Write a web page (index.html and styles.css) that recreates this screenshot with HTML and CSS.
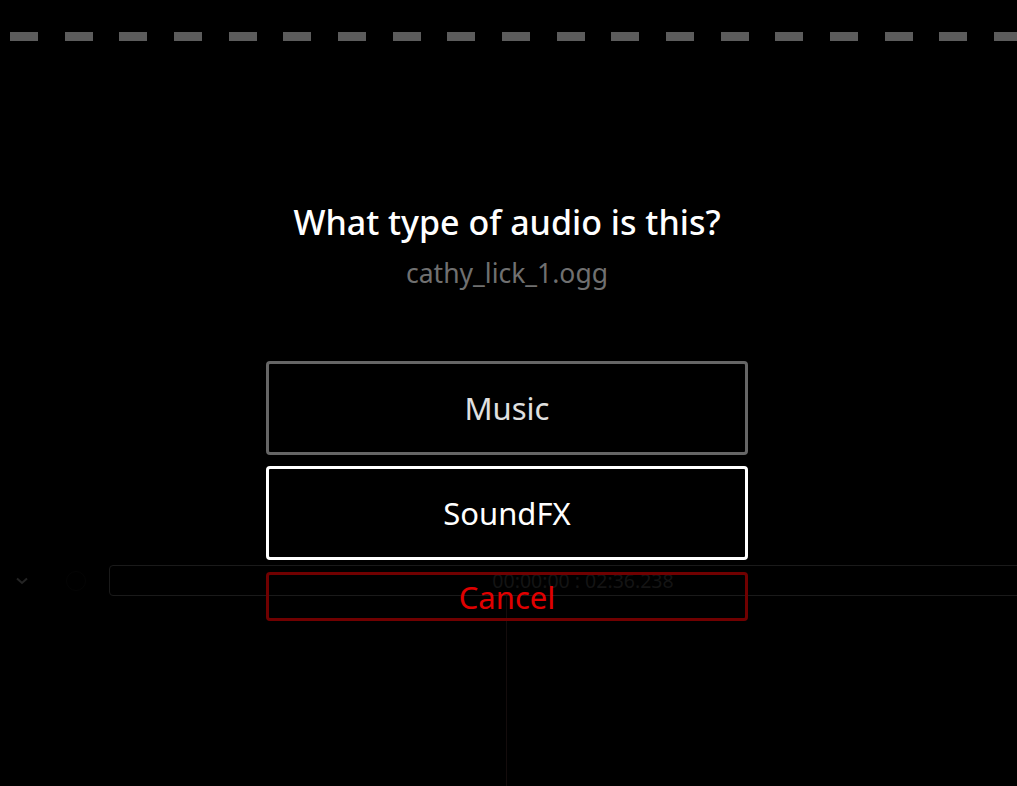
FILE: index.html
```html
<!DOCTYPE html>
<html lang="en">
<head>
<meta charset="utf-8">
<title>Audio type</title>
<link rel="stylesheet" href="styles.css">
</head>
<body>
<div class="app">
  <div class="dashes"></div>
  <div class="stage"></div>
  <div class="toolbar">
    <svg class="chevron" width="12" height="8" viewBox="0 0 12 8"><path d="M1 1.5 L6 6 L11 1.5" fill="none" stroke="#242424" stroke-width="2"/></svg>
    <span class="knob"></span>
    <div class="timebox">00:00:00 : 02:36.238</div>
  </div>
  <div class="track"><div class="playhead"></div></div>
</div>

<div class="overlay">
  <h1 class="title">What type of audio is this?</h1>
  <p class="filename">cathy_lick_1.ogg</p>
  <div class="choices">
    <button class="choice choice-music">Music</button>
    <button class="choice choice-sfx">SoundFX</button>
    <button class="choice choice-cancel">Cancel</button>
  </div>
</div>
</body>
</html>
```
FILE: styles.css
```css
html, body {
  margin: 0;
  padding: 0;
  background: #000;
  width: 1017px;
  height: 786px;
  overflow: hidden;
  font-family: "Noto Sans", "Open Sans", sans-serif;
}

.app {
  display: flex;
  flex-direction: column;
  height: 786px;
}

.dashes {
  margin-top: 32px;
  height: 9px;
  flex-shrink: 0;
  background: repeating-linear-gradient(90deg,
    transparent 0, transparent 10px,
    #5c5c5c 10px, #5c5c5c 38px,
    transparent 38px, transparent 54.67px);
}

.stage {
  height: 524px;
  flex-shrink: 0;
}

.toolbar {
  height: 31px;
  display: flex;
  align-items: center;
  flex-shrink: 0;
}

.chevron {
  margin-left: 16px;
  flex-shrink: 0;
}

.knob {
  flex-shrink: 0;
  width: 18px;
  height: 18px;
  border-radius: 50%;
  border: 1px solid #050505;
  margin-left: 38px;
}

.timebox {
  margin-left: 23px;
  width: 946px;
  flex-shrink: 0;
  height: 29px;
  box-sizing: content-box;
  border: 1px solid #1a1a1a;
  border-radius: 4px;
  color: #141414;
  font-size: 19.5px;
  display: flex;
  align-items: center;
  justify-content: center;
}

.track {
  flex: 1;
  display: flex;
}

.playhead {
  margin-left: 506px;
  width: 1px;
  background: #140c0c;
}

.overlay {
  position: absolute;
  inset: 0;
  padding-right: 3px;
  display: flex;
  flex-direction: column;
  align-items: center;
}

.title {
  margin: 199px 0 0;
  font-size: 34px;
  line-height: 46px;
  font-weight: 500;
  color: #fff;
}

.filename {
  margin: 10px 0 0;
  font-size: 26.5px;
  line-height: 36px;
  color: #707070;
}

.choices {
  margin-top: 70px;
  display: flex;
  flex-direction: column;
  width: 482px;
}

.choice {
  font-family: inherit;
  background: transparent;
  border: 3px solid #666;
  border-radius: 4px;
  height: 94px;
  font-size: 31px;
  color: #e0e0e0;
  padding: 0;
  display: flex;
  align-items: center;
  justify-content: center;
}

.choice-sfx {
  margin-top: 11px;
  border-color: #fff;
  color: #fff;
}

.choice-cancel {
  margin-top: 12px;
  height: 49px;
  border-color: #700000;
  color: #e00000;
}
```
